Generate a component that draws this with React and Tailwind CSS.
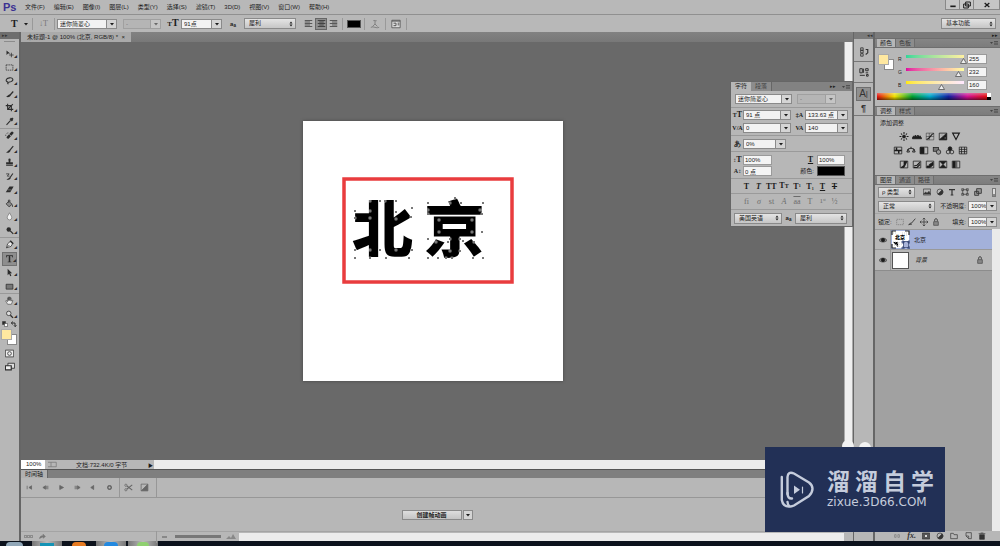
import React from 'react';
import clsx from 'clsx';

const MENUS = ['文件(F)', '编辑(E)', '图像(I)', '图层(L)', '类型(Y)', '选择(S)', '滤镜(T)', '3D(D)', '视图(V)', '窗口(W)', '帮助(H)'];

function Icon({ size = 12, className, children }) {
  return (
    <svg
      width={size}
      height={size}
      viewBox="0 0 12 12"
      fill="none"
      stroke="currentColor"
      strokeWidth="1"
      className={clsx('shrink-0', className)}
      aria-hidden="true"
    >
      {children}
    </svg>
  );
}

function Down({ up }) {
  return (
    <svg width="4" height="6" viewBox="0 0 4 6" fill="currentColor" aria-hidden="true">
      {up && <path d="M0.5 2.4L2 0.4L3.5 2.4Z" />}
      <path d={up ? 'M0.5 3.6L2 5.6L3.5 3.6Z' : 'M0 2L4 2L2 4.5Z'} />
    </svg>
  );
}

// white value with a separate arrow segment
function Combo({ label, value, className, disabled }) {
  return (
    <span className={clsx('relative flex h-[10px] shrink-0 border border-[#8a8a8a]', disabled ? 'opacity-50' : '', className)}>
      <select
        aria-label={label}
        disabled={disabled}
        className={clsx('w-full appearance-none pl-[2px] leading-[8px]', disabled ? 'bg-[#b4b4b4]' : 'bg-[#f2f2f2]')}
      >
        <option>{value}</option>
      </select>
      <span className="pointer-events-none absolute inset-y-0 right-0 flex w-[10px] items-center justify-center border-l border-[#8a8a8a] bg-[#d4d4d4]">
        <Down />
      </span>
    </span>
  );
}

// raised drop-down with up and down arrows
function Picker({ label, value, className, indent = 'pl-1' }) {
  return (
    <span className={clsx('relative flex h-[11px] shrink-0 border border-[#8a8a8a]', className)}>
      <select aria-label={label} className={clsx('w-full appearance-none bg-linear-to-b from-[#e4e4e4] to-[#c6c6c6] leading-[9px]', indent)}>
        <option>{value}</option>
      </select>
      <span className="pointer-events-none absolute inset-y-0 right-[2px] flex items-center">
        <Down up />
      </span>
    </span>
  );
}

function Field({ label, value, className }) {
  return (
    <input
      aria-label={label}
      defaultValue={value}
      className={clsx('h-[10px] shrink-0 border border-[#9a9a9a] bg-[#f4f4f4] pl-[1px] leading-[8px]', className)}
    />
  );
}

function Sep() {
  return <span className="h-3 w-px shrink-0 bg-[#999]" />;
}

function Flyout() {
  return (
    <button aria-label="面板菜单" className="ml-auto flex items-center pr-[2px] text-[#444]">
      <svg width="8" height="6" viewBox="0 0 8 6" fill="currentColor" aria-hidden="true">
        <path d="M0 2h3L1.5 4Z" />
        <path d="M4 1h4v.7H4zM4 2.7h4v.7H4zM4 4.4h4v.7H4z" />
      </svg>
    </button>
  );
}

function Tabs({ items }) {
  return (
    <div className="flex h-[10px] shrink-0 border-y border-[#6e6e6e] bg-linear-to-b from-[#858585] to-[#7c7c7c] pl-[2px]">
      {items.map((t, i) => (
        <button
          key={t}
          className={clsx('border-r border-[#6e6e6e] px-[3px] leading-[8px]', i === 0 ? 'bg-[#b7b7b7] text-[#222]' : 'bg-[#8c8c8c] text-[#3c3c3c]')}
        >
          {t}
        </button>
      ))}
      <Flyout />
    </div>
  );
}

const TOOL_GROUPS = [
  {
    className: 'h-[81px] grid-rows-6',
    tools: [
      ['移动工具', <><path d="M2 2v6l2-2h3Z" fill="currentColor" stroke="none" /><path d="M8.5 5v6M5.5 8h6" /></>],
      ['选框工具', <path d="M1.5 2.5h9v7h-9Z" strokeDasharray="2 1" />],
      ['套索工具', <path d="M4 8C0 7 1 3 6 2.500C11 2 12 6 8 7.500C6 8.300 4 8 3.500 9.500L4.500 11" strokeWidth="1.400" />],
      ['快速选择工具', <><path d="M11 2L6.500 7" strokeWidth="1.600" /><path d="M7 6c-2-.5-3 1-5.500 3C3.500 10 6.500 10 7.500 7Z" fill="currentColor" stroke="none" /></>],
      ['裁剪工具', <path d="M3.500 1v7.500H11M1 3.500h7.500V11M10.500 1.500l-7 7" strokeWidth="1.400" />],
      ['吸管工具', <><path d="M7 2l3 3M8 4l2.500-2.500" strokeWidth="2.600" /><path d="M7.500 4.500L2 10.500" strokeWidth="1.400" /></>],
    ],
  },
  {
    className: 'h-[109px] grid-rows-8',
    tools: [
      ['修复画笔', <><path d="M9.500 2.500L4 8.500" strokeWidth="3.600" strokeLinecap="round" /><path d="M1 6.500c-.5-3 2-4 4-4" strokeDasharray="1 1" /><path d="M6 4.500l2 2" stroke="#ddd" /></>],
      ['画笔工具', <><path d="M11 1.500L6 7.500" strokeWidth="1.500" /><path d="M6.500 6.500C4 6.500 4 9 1.500 9.500c2 1.500 5 .5 6-2Z" fill="currentColor" stroke="none" /></>],
      ['仿制图章', <path d="M4.500 2a1.500 1.500 0 0 1 3 0L7 5.500h3.500V8.500h-9V5.500H5ZM1.500 9.500h9v1h-9Z" fill="currentColor" stroke="none" />],
      ['历史记录画笔', <><path d="M10.500 2L7 7" strokeWidth="1.500" /><path d="M7 6.500C5 7 5 9 2 9.500c2 1.500 5 .5 6-2Z" fill="currentColor" stroke="none" /><path d="M1.500 2.500h4L3 5.500h3" /></>],
      ['橡皮擦', <><path d="M6 2h5.500L7 9.500H1Z" fill="currentColor" stroke="none" /><path d="M3.500 6.500h5" stroke="#bbb" strokeWidth=".6" /></>],
      ['油漆桶', <><path d="M5 3l4.500 4L5.500 10.500L1.500 6.500Z" fill="#8a8a8a" /><path d="M4.500 5V1.500h2V4M10 7.500v3" /></>],
      ['模糊工具', <path d="M6 1C5 3.500 3 5 3 7.500a3 3 0 0 0 6 0C9 5 7 3.500 6 1Z" fill="#f2f2f2" stroke="#777" />],
      ['加深工具', <><circle cx="5" cy="4.500" r="3" fill="currentColor" stroke="none" /><path d="M7 6.500l4 4" strokeWidth="1.600" /></>],
    ],
  },
  {
    className: 'h-[56px] grid-rows-4',
    tools: [
      ['钢笔工具', <><path d="M7 2l3 3-2 3.500L2 10.500L3.500 5Z" fill="#eee" /><path d="M2.500 10L6 6.500" /><path d="M7 1l4 4" strokeWidth="2" /></>],
      ['文字工具', <path d="M1.500 1.500h9v3H9.800c-.2-1.500-.8-2-2.800-2V9.500c0 .5.500.7 1.500.7v.8h-5v-.8c1 0 1.500-.2 1.500-.7V2.500c-2 0-2.600.5-2.800 2h-.7Z" fill="currentColor" stroke="none" />],
      ['路径选择', <path d="M3.500 1v8.500l2-2 1.500 3.500 1.500-.7L7 7h2.500Z" fill="currentColor" stroke="none" />],
      ['矩形工具', <path d="M1.500 3h9v6.500h-9Z" fill="#777" />],
    ],
  },
  {
    className: 'h-[28px] grid-rows-2',
    tools: [
      ['抓手工具', <path d="M3.500 11L1 6.500l1-.5 1.500 1.500V2.500h1V6V1.500h1.200V6V1.500H7V6V2.500h1.200V7l1.300-1.500 1 .5L8.500 11Z" fill="#eee" strokeWidth=".7" />],
      ['缩放工具', <><circle cx="5" cy="4.500" r="3" fill="#ddd" /><path d="M7.200 7l3.500 3.500" strokeWidth="1.800" /></>],
    ],
  },
];

function Toolbox() {
  return (
    <div className="flex w-[21px] shrink-0 flex-col border-r-2 border-[#666] bg-[#b7b7b7] text-[#2c2c2c]">
      <div className="h-[7px] shrink-0 bg-[#6e6e6e] pl-[2px] text-[5px] leading-[6px] text-[#333]">▸▸</div>
      <div className="mx-auto mt-[2px] h-px w-[11px] shrink-0 bg-[#8c8c8c]" />
      <div className="flex flex-col pt-[5px]">
        {TOOL_GROUPS.map((g, gi) => (
          <div key={gi} className={clsx('grid border-[#999]', g.className, gi > 0 && 'border-t')}>
            {g.tools.map(([name, art]) => (
              <button
                key={name}
                aria-label={name}
                className={clsx('relative mx-[2px] flex items-center justify-center', name === '文字工具' && 'border border-[#707070] bg-[#8e8e8e]')}
              >
                <Icon size={9}>{art}</Icon>
                <span className="absolute right-0 bottom-[2px] text-[3px] leading-[3px]">◢</span>
              </button>
            ))}
          </div>
        ))}
      </div>
      <div className="flex h-[8px] shrink-0 justify-between px-[2px]">
        <Icon size={6}><path d="M1 1h6v6H1Z" fill="currentColor" /><path d="M5 5h6v6H5Z" fill="#fff" /></Icon>
        <Icon size={6}><path d="M1 4h7v7M3 1L1 4l2 3M6 9l2 2 3-2" strokeWidth="2" /></Icon>
      </div>
      <Swatches />
      <button aria-label="快速蒙版" className="mt-1 flex justify-center">
        <Icon size={9}><path d="M.5 1.500h11v9H.5Z" fill="#eee" /><circle cx="6" cy="6" r="2.500" /></Icon>
      </button>
      <button aria-label="屏幕模式" className="mt-1 flex justify-center">
        <Icon size={10}><path d="M3.500 1.500h8v6h-8Z" fill="#ddd" /><path d="M.5 4.500h7v5h-7Z" fill="#eee" strokeWidth="1.400" /></Icon>
      </button>
    </div>
  );
}

function Swatches() {
  return (
    <div className="grid shrink-0 grid-cols-[6px_5px_5px] grid-rows-[5px_6px_5px] pl-px">
      <button aria-label="背景色" className="col-span-2 col-start-2 row-span-2 row-start-2 border border-[#888] bg-white" />
      <button aria-label="前景色" className="col-span-2 col-start-1 row-span-2 row-start-1 border border-[#aaa] bg-[#ffe8a0]" />
    </div>
  );
}

function AlignIcon({ d }) {
  return <Icon size={9}><path d={d} strokeWidth="1.100" /></Icon>;
}

function OptionsBar() {
  return (
    <div className="flex h-[18px] shrink-0 items-center border-t border-[#909090] pl-[11px]">
      <span className="flex w-[21px] items-center gap-[6px]">
        <b className="font-[Liberation_Serif] text-[10px]">T</b>
        <Down />
      </span>
      <Sep />
      <span className="w-[21px] text-center font-[Liberation_Serif] text-[8px] text-[#777]">↓T</span>
      <Sep />
      <Combo label="字体" value="迷你简菱心" className="ml-[2px] w-[60px]" />
      <Combo label="字体样式" value="-" disabled className="ml-[6px] w-[38px]" />
      <span className="ml-1"><Sep /></span>
      <span className="w-4 text-center font-[Liberation_Serif] font-bold"><span className="text-[7px]">T</span><span className="text-[10px]">T</span></span>
      <Combo label="字号" value="91点" className="w-[41px]" />
      <span className="w-[22px] text-center text-[6px] font-bold">a<sub>a</sub></span>
      <Picker label="消除锯齿" value="犀利" className="w-[52px]" />
      <span className="ml-1"><Sep /></span>
      <button aria-label="左对齐" className="ml-[2px] flex size-[13px] items-center justify-center text-[#444]"><AlignIcon d="M1 2h10M1 4h7M1 6h10M1 8h7M1 10h10" /></button>
      <button aria-label="居中" className="flex size-[12px] items-center justify-center border border-[#666] bg-[#8e8e8e] text-[#333]"><AlignIcon d="M1 2h10M3 4h6M1 6h10M3 8h6M1 10h10" /></button>
      <button aria-label="右对齐" className="mr-[2px] flex size-[13px] items-center justify-center text-[#444]"><AlignIcon d="M1 2h10M4 4h7M1 6h10M4 8h7M1 10h10" /></button>
      <Sep />
      <button aria-label="文字颜色" className="mr-[3px] ml-[4px] h-[8px] w-[14px] border border-[#555] bg-black" />
      <Sep />
      <button aria-label="变形文字" className="mx-[5px] flex text-[#777]">
        <Icon size={10}><path d="M4 2c1-1 3 1 4 0M6 2v4L3 9M6 6l3 3M1 10c3-2 7 2 10 0" /></Icon>
      </button>
      <Sep />
      <button aria-label="字符面板" className="mx-[5px] flex text-[#555]">
        <Icon size={10}><path d="M1 1.500h10v9H1Z" fill="#ddd" /><path d="M1 2.500h10M3 5h3v3H3M8 5h2M8 7h2" strokeWidth="1.200" /></Icon>
      </button>
      <Sep />
      <Picker label="工作区" value="基本功能" className="mr-[4px] ml-auto w-[55px]" />
    </div>
  );
}

const ANCHORS = [
  [67, 80], [77, 80], [82, 80], [93, 80], [52, 90], [67, 90], [52, 97], [67, 97], [109, 87], [108, 96], [93, 91], [93, 98],
  [52, 129], [67, 129], [52, 137], [67, 137], [77, 129], [83, 137], [93, 129], [109, 129], [106, 137],
  [125, 82], [125, 89], [147, 82], [152, 77], [158, 82], [180, 82], [177, 89], [125, 93], [179, 93], [179, 111], [125, 118],
  [136, 99], [169, 99], [136, 111], [169, 111], [133, 121], [145, 121], [125, 137], [135, 137], [147, 118], [157, 118],
  [157, 130], [147, 130], [143, 137], [149, 137], [160, 120], [171, 121], [170, 137], [180, 137],
];

function Artboard() {
  return (
    <svg viewBox="0 0 260 260" className="w-[260px] bg-white shadow-[0_0_3px_#444]">
      <rect x="41" y="58" width="168" height="103" fill="none" stroke="#e93c3e" strokeWidth="3.500" />
      <g fontFamily="'Noto Sans CJK SC', sans-serif" fontWeight="900" fontSize="61">
        <text x="49" y="131">北</text>
        <text x="121" y="131">京</text>
      </g>
      <g fill="#111" stroke="#fff" strokeWidth=".5">
        {ANCHORS.map(([x, y]) => (
          <rect key={`${x}-${y}`} x={x - 1} y={y - 1} width="2" height="2" />
        ))}
      </g>
    </svg>
  );
}

function CharPanel() {
  const lab = 'w-[11px] shrink-0 text-center font-[Liberation_Serif] text-[8px] leading-[9px] font-bold';
  return (
    <section className="absolute top-[49px] right-0 w-[123px] border border-[#666] bg-[#b7b7b7]">
      <div className="flex h-[9px] bg-[#828282]">
        <button className="bg-[#b7b7b7] px-[4px] leading-[9px]">字符</button>
        <button className="border-r border-[#666] bg-[#8c8c8c] px-[4px] leading-[9px] text-[#444]">段落</button>
        <span className="ml-auto text-[5px] leading-[9px]">▸▸</span>
        <span className="ml-[6px] flex"><Flyout /></span>
      </div>
      <div className="flex h-[17px] items-center gap-[5px] border-b border-[#9a9a9a] pl-[4px]">
        <Combo label="字符字体" value="迷你简菱心" className="w-[57px]" />
        <Combo label="字符样式" value="-" disabled className="w-[39px]" />
      </div>
      <div className="flex flex-col gap-[3px] border-b border-[#9a9a9a] pt-[2px] pb-[2px] pl-px">
        <div className="flex">
          <span className={lab}><span className="text-[6px]">T</span>T</span>
          <Combo label="大小" value="91 点" className="w-[48px]" />
          <span className="w-[3px]" />
          <span className={lab}><span className="text-[6px]">‡A</span></span>
          <Combo label="行距" value="133.63 点" className="w-[43px]" />
        </div>
        <div className="flex">
          <span className={lab}><span className="text-[6px]">V/A</span></span>
          <Combo label="字距微调" value="0" className="w-[48px]" />
          <span className="w-[3px]" />
          <span className={lab}><span className="text-[6px]">VA</span></span>
          <Combo label="字距" value="140" className="w-[43px]" />
        </div>
      </div>
      <div className="flex h-[16px] items-center border-b border-[#9a9a9a] pl-px">
        <span className={lab}><span className="text-[7px]">あ</span></span>
        <Combo label="比例间距" value="0%" className="w-[43px]" />
      </div>
      <div className="flex flex-col gap-px border-b border-[#9a9a9a] pt-[3px] pb-[2px] pl-px">
        <div className="flex">
          <span className={lab}><span className="text-[6px]">↕</span>T</span>
          <Field label="垂直缩放" value="100%" className="w-[29px]" />
          <span className={clsx(lab, 'ml-auto underline')}>T</span>
          <Field label="水平缩放" value="100%" className="mr-[7px] ml-[1px] w-[28px]" />
        </div>
        <div className="flex">
          <span className={lab}><span className="text-[6px]">A↕</span></span>
          <Field label="基线偏移" value="0 点" className="w-[29px]" />
          <span className="mr-[3px] ml-auto leading-[10px]">颜色:</span>
          <button aria-label="颜色" className="mr-[7px] h-[10px] w-[28px] border border-[#555] bg-black" />
        </div>
      </div>
      <div className="flex h-[15px] items-center gap-[3px] border-b border-[#9a9a9a] pl-[11px] font-[Liberation_Serif] text-[8px] leading-[9px] font-bold">
        <button className="w-[9px]">T</button>
        <button className="w-[9px] italic">T</button>
        <button className="w-[10px]">TT</button>
        <button className="w-[10px]">T<span className="text-[6px]">T</span></button>
        <button className="w-[10px]">T<sup className="text-[4px]">1</sup></button>
        <button className="w-[10px]">T<sub className="text-[4px]">1</sub></button>
        <button className="w-[9px] underline">T</button>
        <button className="w-[9px] line-through">T</button>
      </div>
      <div className="flex h-[16px] items-center gap-[3px] border-b border-[#9a9a9a] pl-[11px] font-[Liberation_Serif] text-[8px] leading-[9px] text-[#6c6c6c]">
        <button className="w-[9px]">fi</button>
        <button className="w-[10px] italic">σ</button>
        <button className="w-[9px]">st</button>
        <button className="w-[10px] italic">A</button>
        <button className="w-[10px] overline">aa</button>
        <button className="w-[10px]">T</button>
        <button className="w-[9px] text-[7px]">1<sup className="text-[4px]">st</sup></button>
        <button className="w-[9px]">½</button>
      </div>
      <div className="flex h-[16px] items-center pl-[3px]">
        <Picker label="语言" value="美国英语" className="w-[48px]" />
        <span className="w-[13px] text-center font-bold">a<sub>a</sub></span>
        <Picker label="锯齿" value="犀利" className="w-[52px]" />
      </div>
    </section>
  );
}

const TRANSPORT = [
  ['第一帧', 'M2 3v6M9.500 3v6L5 6Z', 16],
  ['上一帧', 'M6 3v6L1.500 6ZM8 3v6M10 3v6', 16],
  ['播放', 'M3 2.500v7L9.500 6Z', 16],
  ['下一帧', 'M6 3v6L10.500 6ZM4 3v6M2 3v6', 16],
  ['音频', 'M8 2.500v7L3 6Z', 15],
  ['设置', 'M6 3a3 3 0 1 0 .1 0', 19],
];

function Timeline() {
  return (
    <section className="flex h-[72px] shrink-0 flex-col border-t border-[#555] bg-[#b7b7b7]">
      <div className="flex h-[8px] shrink-0 bg-[#7f7f7f]">
        <button className="border-r border-[#666] bg-[#b0b0b0] px-[4px] leading-[8px]">时间轴</button>
      </div>
      <div className="flex h-[20px] shrink-0 items-center border-b border-[#979797] text-[#666]">
        {TRANSPORT.map(([name, d, w]) => (
          <button key={name} aria-label={name} className="flex justify-center" style={{ width: w }}>
            <Icon size={7}><path d={d} fill={name === '设置' ? 'none' : 'currentColor'} strokeWidth={name === '设置' ? '2.500' : '1.300'} /></Icon>
          </button>
        ))}
        <span className="h-full w-px bg-[#979797]" />
        <button aria-label="拆分" className="ml-1 flex w-[16px]">
          <Icon size={9}><circle cx="2.500" cy="3" r="1.500" /><circle cx="2.500" cy="9" r="1.500" /><path d="M4 4l7 5.500M4 8l7-5.500" strokeWidth="1.400" /></Icon>
        </button>
        <button aria-label="过渡" className="flex w-[16px]">
          <Icon size={9}><path d="M1.500 1.500h9v9h-9Z" /><path d="M10 2v8H2Z" fill="currentColor" /></Icon>
        </button>
        <span className="h-full w-px bg-[#979797]" />
      </div>
      <div className="flex flex-1 items-center justify-center gap-px">
        <button className="h-[10px] w-[60px] border border-[#8a8a8a] bg-linear-to-b from-[#dedede] to-[#c4c4c4] leading-[8px] font-bold">创建帧动画</button>
        <button aria-label="更多" className="flex h-[10px] w-[10px] items-center justify-center border border-[#8a8a8a] bg-[#d4d4d4]"><Down /></button>
      </div>
      <TimelineScroll />
    </section>
  );
}

function TimelineScroll() {
  return (
    <div className="flex h-[10px] shrink-0 items-center border-t border-[#a4a4a4]">
      <span className="flex w-[135px] items-center text-[#777]">
        <span className="ml-[3px] flex">
          {[0, 1, 2].map((i) => <span key={i} className="size-[3px] border border-[#8c8c8c]" />)}
        </span>
        <Icon size={7} className="ml-[6px]"><path d="M1 10c0-4 3-6 6-5V2l4 4-4 3V7" fill="currentColor" /></Icon>
      </span>
      <Sep />
      <span className="mr-[8px] ml-[5px] h-[2px] w-[5px] bg-[#888]" />
      <span className="h-[3px] w-[46px] bg-[#777]" />
      <svg width="10" height="5" viewBox="0 0 10 5" className="mr-[3px] ml-[5px]" aria-hidden="true"><path d="M0 5L3 2L5 4L7 0L10 5Z" fill="#888" /></svg>
      <span className="mr-[9px] h-[8px] flex-1 bg-[#ececec]" />
    </div>
  );
}

function Document() {
  return (
    <main className="relative flex min-w-0 flex-1 flex-col">
      <div className="flex h-[10px] shrink-0 bg-linear-to-b from-[#828282] to-[#787878]">
        <button className="bg-[#aaa] px-[6px] leading-[10px] whitespace-pre">未标题-1 @ 100% (北京, RGB/8) *  ×</button>
      </div>
      <div className="flex min-h-0 flex-1">
        <div className="flex min-w-0 flex-1 flex-col">
          <div className="flex min-h-0 flex-1 items-center justify-center bg-[#696969]">
            <Artboard />
          </div>
          <div className="flex h-[9px] shrink-0 items-center bg-[#ececec]">
            <span className="w-[24px] bg-white pl-[5px] leading-[9px]">100%</span>
            <span className="flex h-full w-[109px] items-center bg-[#b7b7b7]">
              <Icon size={9} className="ml-[3px]"><path d="M0 3h11v6H0M4 3v6" stroke="#777" /></Icon>
              <span className="ml-[19px]">文档:732.4K/0 字节</span>
              <span className="mr-px ml-auto text-[5px]">▶</span>
            </span>
          </div>
        </div>
        <div className="w-[9px] shrink-0 border-x border-[#aaa] bg-[#efefef]" />
      </div>
      <Timeline />
      <CharPanel />
    </main>
  );
}

function Dock() {
  const row = 'flex items-center justify-center';
  return (
    <aside className="flex w-[21px] shrink-0 flex-col border-x border-[#666] bg-[#b7b7b7] text-[#333]">
      <div className="h-[7px] bg-[#7b7b7b] text-right text-[5px] leading-[6px]">◂◂</div>
      <button aria-label="历史记录" className={clsx(row, 'h-[23px] border-b border-[#777] pt-1')}>
        <Icon size={10}><path d="M2 1h3v3H2ZM2 4h3v3H2ZM2 8h3v3H2Z" /><path d="M8 3h2.500v4L8 9" strokeWidth="1.400" /></Icon>
      </button>
      <button aria-label="属性" className={clsx(row, 'h-[21px] border-b border-[#777]')}>
        <Icon size={10}><path d="M1 2h3v5H1ZM5.500 2v5M8 2h3v2.500H8ZM8 7h3M1 10h6M9 9h2v2H9Z" strokeWidth="1.200" /></Icon>
      </button>
      <button aria-label="字符" className={clsx(row, 'mx-[2px] mt-[4px] h-[14px] border border-[#6e6e6e] bg-[#909090] text-[10px]')}>A<span className="text-[8px]">|</span></button>
      <button aria-label="段落" className={clsx(row, 'h-[14px] text-[9px] font-bold')}>¶</button>
      <div className="flex-1 border-t border-[#777]" />
    </aside>
  );
}

const CHANNELS = [
  ['R', 255, 'from-[#2fd79a] to-[#fff0a0]'],
  ['G', 232, 'from-[#e000a0] to-[#ffffa0]'],
  ['B', 160, 'from-[#ffe800] to-[#ffe8ff]'],
];

function ColorPanel() {
  return (
    <section className="h-[58px]">
      <div className="flex pt-[6px] pl-[2px]">
        <div className="w-[21px]"><Swatches /></div>
        <div className="flex flex-1 flex-col gap-[3px]">
          {CHANNELS.map(([name, value, colors]) => (
            <div key={name} className="flex h-[10px] items-center">
              <span className="w-[8px] text-[5px]">{name}</span>
              <span className="relative h-[8px] w-[58px]">
                <span className={clsx('block h-[3px] bg-linear-to-r', colors)} />
                <input type="range" aria-label={name} min="0" max="255" defaultValue={value} className="absolute inset-0 w-full opacity-0" />
                <svg
                  width="7"
                  height="6"
                  viewBox="0 0 7 6"
                  className="pointer-events-none absolute top-[3px] -ml-[4px]"
                  style={{ left: `${(value / 255) * 100}%` }}
                  aria-hidden="true"
                >
                  <path d="M3.500.5L6.500 5.500H.5Z" fill="#eee" stroke="#555" strokeWidth=".8" />
                </svg>
              </span>
              <Field label={`${name} 值`} value={value} className="ml-[3px] w-[20px]" />
            </div>
          ))}
        </div>
      </div>
      <div className="mt-[3px] mr-[9px] ml-[2px] flex h-[7px]">
        <span className="flex-1 bg-[linear-gradient(to_bottom,rgba(255,255,255,.35),transparent,rgba(0,0,0,.5)),linear-gradient(to_right,#e01010,#f0e000_16%,#00a030_32%,#00a8c8_48%,#1020a0_65%,#d01090_82%,#e01010)]" />
        <span className="flex w-1 flex-col"><span className="flex-1 bg-white" /><span className="flex-1 bg-black" /></span>
      </div>
    </section>
  );
}

const ADJUSTMENTS = [
  [
    <><circle cx="6" cy="6" r="2" fill="currentColor" /><path d="M6 0v2.500M6 9.500V12M0 6h2.500M9.500 6H12M2 2l1.500 1.500M8.500 8.500L10 10M10 2L8.500 3.500M2 10l1.500-1.500" strokeWidth="1.400" /></>,
    <path d="M0 9V7l2-2 1 2 1-3 2 3 1-3 2 2 1-1 2 3v1Z" fill="currentColor" />,
    <><path d="M1 1.500h10v9H1ZM1 6h10M5 1.500v9" strokeWidth=".6" /><path d="M1.500 10C7 9 6 3 11 2" strokeWidth="1.400" /></>,
    <><path d="M1 1.500h10v9H1Z" /><path d="M10.500 2v8h-9Z" fill="currentColor" /><path d="M3 4h3M8 8h2" stroke="#999" /></>,
    <path d="M1.500 1.500h9L6 10Z" strokeWidth="1.500" />,
  ],
  [
    <><path d="M1 1.500h10v9H1Z" /><path d="M1 6h10M4 2v4M7 6v4" strokeWidth="2" /></>,
    <path d="M6 1v2M2 4l4-1 4 1M2 4L.5 8h3.500ZM10 4L8 8h3.500Z" strokeWidth="1.200" />,
    <><path d="M1 1.500h10v9H1Z" /><path d="M1 2h5v8H1Z" fill="currentColor" /></>,
    <><rect x="1" y="2" width="7" height="5" fill="#777" /><circle cx="8" cy="8" r="3" fill="#999" /></>,
    <><circle cx="6" cy="3.500" r="2.500" fill="currentColor" /><circle cx="3.500" cy="8" r="2.500" /><circle cx="8.500" cy="8" r="2.500" /></>,
    <path d="M1 1.500h10v9H1ZM1 4.500h10M1 7.500h10M4 1.500v9M8 1.500v9" />,
  ],
  [
    <><path d="M1 1.500h10v9H1Z" /><path d="M6 2v5L2 10h4l4-8Z" fill="currentColor" /></>,
    <><path d="M1 1.500h10v9H1Z" /><path d="M2 8l4-1 4-4M2 10h4l4-4" strokeWidth="1.500" /></>,
    <><path d="M1 1.500h10v9H1Z" /><path d="M2 10V8h3V6l5-3v4l-4 3Z" fill="currentColor" /></>,
    <><path d="M1 1.500h10v9H1Z" /><path d="M2 2h8L6 6ZM2 10h8L6 6Z" fill="currentColor" /></>,
    <><path d="M1 1.500h10v9H1ZM7 2v8" /><path d="M2 2h3v8H2Z" fill="currentColor" /></>,
  ],
];

function Adjustments() {
  return (
    <section className="flex h-[59px] flex-col pt-[3px] pl-[5px]">
      <span className="leading-[9px]">添加调整</span>
      <div className="mr-[20px] flex flex-col gap-[5px] pt-[4px]">
        {ADJUSTMENTS.map((row, i) => (
          <div key={i} className="flex justify-center gap-[3px]">
            {row.map((art, j) => (
              <button key={j} aria-label={`调整 ${i + 1}-${j + 1}`}><Icon size={9} className="mx-auto w-[10px]">{art}</Icon></button>
            ))}
          </div>
        ))}
      </div>
    </section>
  );
}

function Eye() {
  return <Icon size={8}><path d="M0 6.500C3 2 9 2 12 6.500C9 10 3 10 0 6.500Z" fill="#888" strokeWidth=".8" /><circle cx="6" cy="6" r="2.500" fill="currentColor" /></Icon>;
}

function Lock() {
  return <Icon size={8}><path d="M2.500 5.500h7v5.500h-7Z" fill="#888" /><path d="M4 5V3a2 2 0 0 1 4 0v2" strokeWidth="1.400" /></Icon>;
}

function Layers() {
  return (
    <section className="flex min-h-0 flex-1 flex-col">
      <div className="flex h-[14px] shrink-0 items-center pl-[3px]">
        <Picker label="筛选" value="ρ 类型" className="w-[37px]" indent="pl-[3px]" />
        <span className="flex flex-1 justify-around pr-[8px] pl-[6px] text-[#333]">
          <Icon size={8}><path d="M.5 1.500h11v9H.5Z" /><path d="M1 9l3-3 2 2 3-3 2 4Z" fill="currentColor" /></Icon>
          <Icon size={8}><circle cx="6" cy="6" r="4.500" /><path d="M9 3a4 4 0 0 1-6 6Z" fill="currentColor" /></Icon>
          <Icon size={8}><path d="M1.500 2.500h9M6 2v9M4 10.500h4" strokeWidth="1.800" /></Icon>
          <Icon size={8}><path d="M2.500 2.500h7v7h-7ZM1 1h3v3H1ZM8 1h3v3H8ZM1 8h3v3H1ZM8 8h3v3H8Z" strokeWidth=".9" /></Icon>
          <Icon size={8}><path d="M4 1h7v7H4ZM1 5h6v6H1Z" fill="#999" strokeWidth="1.300" /></Icon>
        </span>
        <span className="mr-[4px] flex h-[9px] w-[4px] flex-col border border-[#777] bg-[#888]"><span className="h-[5px] bg-[#ddd]" /></span>
      </div>
      <div className="flex h-[15px] shrink-0 items-center border-b border-[#a5a5a5] pl-[3px]">
        <Picker label="混合模式" value="正常" className="w-[57px]" />
        <span className="mr-[2px] ml-auto">不透明度:</span>
        <Combo label="不透明度" value="100%" className="mr-[3px] w-[29px]" />
      </div>
      <div className="flex h-[15px] shrink-0 items-center pl-[3px]">
        <span>锁定:</span>
        <span className="ml-[4px] flex gap-[4px] text-[#444]">
          <Icon size={8}><path d="M1 2h10v8H1Z" strokeDasharray="2 1" stroke="#777" /></Icon>
          <Icon size={8}><path d="M11 1L5 8M5 7l-4 3 5-1" strokeWidth="1.500" /></Icon>
          <Icon size={8}><path d="M6 0v12M0 6h12M4 2l2-2 2 2M4 10l2 2 2-2M2 4L0 6l2 2M10 4l2 2-2 2" strokeWidth="1.300" /></Icon>
          <Lock />
        </span>
        <span className="mr-[2px] ml-auto">填充:</span>
        <Combo label="填充" value="100%" className="mr-[3px] w-[29px]" />
      </div>
      <div className="flex min-h-0 flex-1">
        <ul className="flex-1 bg-[#a1a1a1]">
          <li className="flex h-[21px] items-center border-y border-[#999] bg-[#a3b1da]">
            <span className="flex w-[16px] justify-center self-stretch border-r border-[#999] bg-[#b7b7b7] pt-[6px]"><Eye /></span>
            <svg width="19" height="19" viewBox="0 0 19 19" aria-hidden="true">
              <path d="M1 1h17v17H1Z" fill="#fff" />
              <path d="M2 12h5v5M3 15h3M8 12v5M11 3h5M13 5h4M2 3h3M10 14h3" stroke="#ccc" strokeDasharray="1 1" />
              <path d="M1 5V1h4M14 1h4v4M1 14v4h4" fill="none" stroke="#222" strokeWidth="1.200" />
              <text x="4" y="9" fontSize="5" fontWeight="900">北京</text>
              <path d="M12.500 11.500h5v6h-5ZM11 11h2v2h-2ZM17 11h2v2h-2ZM11 17h2v2h-2ZM17 17h2v2h-2Z" fill="#a9b4d8" stroke="#223366" strokeWidth=".7" />
            </svg>
            <span className="ml-[4px]">北京</span>
          </li>
          <li className="flex h-[21px] items-center border-b border-[#8c8c8c] bg-[#b7b7b7]">
            <span className="flex w-[16px] items-center justify-center self-stretch border-r border-[#999]"><Eye /></span>
            <span className="mx-px size-[17px] border border-[#555] bg-white" />
            <span className="ml-[5px] italic">背景</span>
            <span className="mr-[8px] ml-auto text-[#444]"><Lock /></span>
          </li>
        </ul>
        <div className="w-[8px] bg-[#eaeaea]" />
      </div>
      <div className="flex h-[10px] shrink-0 items-center justify-end gap-[6px] bg-[#b7b7b7] pr-[14px] text-[#333]">
        <Icon size={8} className="text-[#777]"><path d="M5 4H2.500v4H5M7 4h2.500v4H7M4 6h4" /></Icon>
        <button className="font-[Liberation_Serif] text-[8px] leading-[8px] font-bold italic">fx.</button>
        <Icon size={8}><path d="M.5 1.500h11v9H.5Z" fill="#555" /><circle cx="6" cy="6" r="2.500" fill="#ddd" /></Icon>
        <Icon size={8}><circle cx="6" cy="6" r="4.500" /><path d="M9 3a4 4 0 0 1-6 6Z" fill="currentColor" /></Icon>
        <Icon size={8}><path d="M1 10V2h4l1 2h5v6Z" /></Icon>
        <Icon size={8}><path d="M3 1h8v9H7L3 6ZM3 6h4v4" /></Icon>
        <Icon size={8}><path d="M1 2.500h10M4 1.500h4M2.500 4h7v7h-7Z" fill="currentColor" /></Icon>
      </div>
    </section>
  );
}

function Watermark() {
  return (
    <div className="absolute right-[55px] bottom-[14px] w-[180px]">
      <span className="absolute -top-[7px] left-[77px] size-[12px] rounded-full bg-[#f2f2f2]" />
      <span className="absolute -top-[5px] left-[94px] size-[12px] rounded-full bg-[#f2f2f2]" />
      <div className="relative flex h-[85px] items-center gap-[11px] bg-[#223056] pl-[15px] text-[#c5ccdc]">
        <svg width="36" height="38" viewBox="0 0 36 38" fill="none" stroke="currentColor" strokeWidth="2.400" strokeLinecap="round" aria-hidden="true">
          <path d="M7.500 23V6Q8 0 14 2.500L29 11.500Q36 17 29 25L14 34.500Q8 37.500 7.500 31" />
          <path d="M7.500 22Q7.500 28 12 27.500" />
          <path d="M1.800 6V29Q3 35.500 9 35.500" />
          <path d="M14 14.500v8.500l6-4.200Z" fill="currentColor" stroke="none" />
          <path d="M22.500 16v6" strokeWidth="1.200" />
        </svg>
        <div className="pb-px">
          <div className="flex gap-[5px] text-[23px] leading-[27px] font-bold">
            {[...'溜溜自学'].map((c, i) => <span key={i}>{c}</span>)}
          </div>
          <div className="font-[DejaVu_Sans] text-[12px] leading-[13px]">zixue.3D66.COM</div>
        </div>
      </div>
    </div>
  );
}

function Taskbar() {
  const slot = 'flex h-full w-[30px] items-end justify-center bg-linear-to-r from-[#777] via-[#bbb] to-[#777]';
  return (
    <footer className="flex h-[5px] shrink-0 items-end gap-[2px] overflow-hidden bg-[#0c121c] pl-[6px]">
      <span className="mr-[7px] h-[4px] w-[17px] rounded-t-full bg-[#91a7b8]" />
      <span className={slot}><span className="h-[3px] w-[14px] bg-[#1493b5]" /></span>
      <span className="mx-[8px] h-[4px] w-[14px] rounded-t-full bg-[#e77b22]" />
      <span className={slot}><span className="h-[4px] w-[14px] rounded-t-full bg-[#2389e0]" /></span>
      <span className={slot}><span className="h-[4px] w-[12px] rounded-t-full bg-[#8fd070]" /></span>
    </footer>
  );
}

export default function App() {
  return (
    <div className="relative flex h-screen w-full flex-col overflow-hidden bg-[#b8b8b8] font-['Liberation_Sans','Noto_Sans_CJK_SC',sans-serif] text-[6px] leading-[8px] text-[#1c1c1c]">
      <header className="flex h-[14px] shrink-0 items-center pl-[3px]">
        <b className="w-[22px] text-[11px] leading-[12px] text-[#3b3192]">Ps</b>
        <nav className="flex gap-[9px]">
          {MENUS.map((m) => <button key={m}>{m}</button>)}
        </nav>
        <div className="ml-auto flex h-[10px] self-start border border-t-0 border-[#888] bg-[#c6c6c6]">
          <button aria-label="最小化" className="flex w-[14px] items-center justify-center border-r border-[#888]"><Icon size={8}><path d="M2 8h8" strokeWidth="2.500" /></Icon></button>
          <button aria-label="还原" className="flex w-[14px] items-center justify-center border-r border-[#888]"><Icon size={8}><path d="M4 1.500h7v6H4ZM1 4.500h7v6H1Z" strokeWidth="1.500" /></Icon></button>
          <button aria-label="关闭" className="flex w-[25px] items-center justify-center"><Icon size={8}><path d="M2.500 3l7 6M9.500 3l-7 6" strokeWidth="2" /></Icon></button>
        </div>
      </header>
      <OptionsBar />
      <div className="flex min-h-0 flex-1">
        <Toolbox />
        <Document />
        <Dock />
        <aside className="flex w-[126px] shrink-0 flex-col border-l border-[#666] bg-[#b7b7b7]">
          <div className="h-[6px] shrink-0 bg-[#7b7b7b] pr-[2px] text-right text-[5px] leading-[6px]">▸▸</div>
          <Tabs items={['颜色', '色板']} />
          <ColorPanel />
          <Tabs items={['调整', '样式']} />
          <Adjustments />
          <Tabs items={['图层', '通道', '路径']} />
          <Layers />
        </aside>
      </div>
      <Taskbar />
      <Watermark />
    </div>
  );
}
